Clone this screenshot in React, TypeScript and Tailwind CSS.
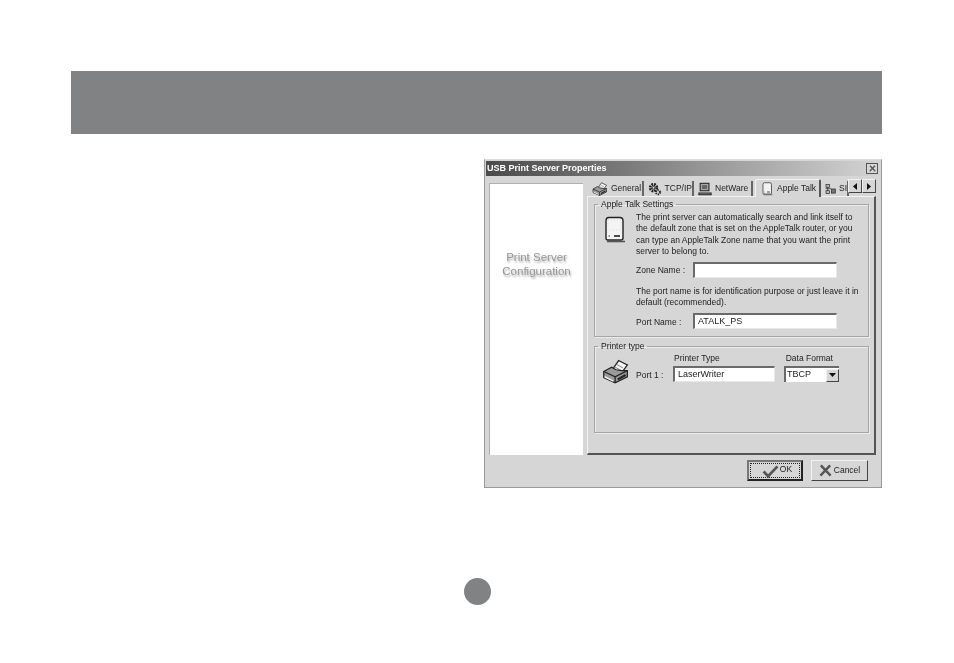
const font = "font-['Liberation_Sans',Arial,sans-serif]";

const PrinterIcon = ({ className = "" }: { className?: string }) => (
  <svg viewBox="0 0 32 28" className={className} fill="none" stroke="#222" strokeWidth="1.4">
    <path d="M11 13 L19 1.5 L29 6.5 L22 16 Z" fill="#f4f4f4" />
    <path d="M17 6 L24 10 M15 9 L22 13" stroke="#777" strokeWidth="1" />
    <path d="M2 14 L11 9 L16 12 L22 13 L29 13 L29 20 L15 27 L2 21 Z" fill="#9a9a9a" />
    <path d="M2 14 L15 20 L29 13 M15 20 L15 27" />
    <path d="M3 20 L13 25" stroke="#f0f0f0" strokeWidth="1.6" />
    <path d="M18 23 L27 18" stroke="#222" strokeWidth="2.4" />
  </svg>
);

const GearIcon = ({ className = "" }: { className?: string }) => (
  <svg viewBox="0 0 16 16" className={className} fill="#555" stroke="#222" strokeWidth="1">
    <circle cx="6.5" cy="6.5" r="3.8" strokeDasharray="2 1" strokeWidth="3.4" fill="none" />
    <circle cx="6.5" cy="6.5" r="1.6" fill="#ddd" />
    <circle cx="11.8" cy="11.8" r="2.4" strokeDasharray="1.4 1" strokeWidth="2.2" fill="none" />
  </svg>
);

const MonitorIcon = ({ className = "" }: { className?: string }) => (
  <svg viewBox="0 0 16 16" className={className} fill="none" stroke="#222" strokeWidth="1.2">
    <rect x="2.5" y="1.5" width="10" height="8.5" fill="#aaa" />
    <rect x="4.5" y="3.5" width="6" height="4.5" fill="#666" stroke="none" />
    <path d="M1 12.5 H15 V14.5 H1 Z" fill="#999" />
  </svg>
);

const MacIcon = ({ className = "" }: { className?: string }) => (
  <svg viewBox="0 0 22 28" className={className} fill="none" stroke="#222" strokeWidth="1.4">
    <path d="M5 1.5 H16 Q19 1.5 19 5 V22 Q19 24 17 24 H4 Q2 24 2 22 V5 Q2 1.5 5 1.5 Z" fill="#f4f4f4" />
    <path d="M4 4 H17 V14 H4 Z" stroke="#ddd" strokeDasharray="1 2" strokeWidth="1" />
    <path d="M10 20 H16" strokeWidth="1.6" />
    <path d="M4.5 20 H6" stroke="#777" />
    <path d="M3 25.5 H21" stroke="#555" strokeWidth="1.6" />
  </svg>
);

const NetworkIcon = ({ className = "" }: { className?: string }) => (
  <svg viewBox="0 0 16 16" className={className} fill="#bbb" stroke="#222" strokeWidth="1">
    <rect x="1.5" y="1.5" width="5" height="4" />
    <rect x="1.5" y="10.5" width="5" height="4" />
    <rect x="9.5" y="8" width="5.5" height="6" fill="#777" />
    <path d="M1 7.5 H9 M4 5.5 V10.5" fill="none" />
  </svg>
);

const CheckIcon = ({ className = "" }: { className?: string }) => (
  <svg viewBox="0 0 18 14" className={className} fill="none">
    <path d="M1.5 7 L6.5 12 L16.5 1.5" stroke="#555" strokeWidth="3" />
  </svg>
);

const CrossIcon = ({ className = "" }: { className?: string }) => (
  <svg viewBox="0 0 14 14" className={className} fill="none">
    <path d="M2 1.5 L12.5 12.5 M12 1.5 L1.5 12.5" stroke="#555" strokeWidth="2.6" />
  </svg>
);

const Tab = ({ width, icon, label, active }: { width: string; icon: React.ReactNode; label: string; active?: boolean }) => (
  <div
    className={
      active
        ? `${width} relative z-10 h-[18px] -mb-[1px] flex items-center gap-[4px] pl-[6px] bg-[#d6d6d6] border-t border-l border-[#f2f2f2] border-r-2 border-r-[#555] rounded-t-[2px] text-[8.5px] text-[#1c1c1c]`
        : `${width} mt-[2px] h-[15px] flex items-center gap-[3px] pl-[2px] border-r-2 border-r-[#666] text-[8.5px] text-[#1c1c1c]`
    }
  >
    {icon}
    <span className="whitespace-nowrap">{label}</span>
  </div>
);

const TextInput = ({ width, value }: { width: string; value?: string }) => (
  <div className={`${width} h-[16px] bg-white border-t-2 border-l-2 border-t-[#6a6a6a] border-l-[#6a6a6a] border-b border-r border-b-[#e8e8e8] border-r-[#e8e8e8] pl-[3px] text-[9px] leading-[12px] text-[#222]`}>
    {value}
  </div>
);

const Group = ({ title, className, children }: { title: string; className: string; children: React.ReactNode }) => (
  <fieldset className={`${className} w-[275px] min-w-0 border border-[#a6a6a6] shadow-[inset_1px_1px_0_#ececec,1px_1px_0_#ececec]`}>
    <legend className="ml-[3px] px-[3px] text-[8.5px] leading-[11px] text-[#1c1c1c]">{title}</legend>
    {children}
  </fieldset>
);

export default function App() {
  return (
    <div className={`${font} w-[954px] h-[663px] bg-white overflow-hidden flex flex-col items-start`}>
      <div className="ml-[71px] mt-[71px] w-[811px] h-[63px] bg-[#808284]" />

      {/* dialog scan */}
      <div className="ml-[484px] mt-[25px] w-[398px] h-[329px] bg-[#d6d6d6] border border-[#9a9a9a] border-t-[#dcdcdc] flex flex-col blur-[0.5px]">
        <div className="mx-[1px] mt-[1px] h-[15px] shrink-0 pl-[1px] pr-[2px] flex items-center justify-between bg-gradient-to-r from-[#4a4a4a] via-[#8f8f8f] to-[#d4d4d4]">
          <span className="text-[9px] font-bold text-white whitespace-nowrap">USB Print Server Properties</span>
          <div className="w-[12px] h-[11px] bg-[#d6d6d6] border border-[#555] flex items-center justify-center">
            <CrossIcon className="w-[7px] h-[7px]" />
          </div>
        </div>

        <div className="flex items-start pt-[3px] pl-[4px] gap-[4px]">
          <div className="mt-[4px] w-[94px] h-[272px] bg-white border-l border-t border-[#b0b0b0] flex flex-col items-center pt-[66px] text-[11.5px] leading-[14px] text-[#979797] [text-shadow:1px_2px_2px_#aaa]">
            <span>Print Server</span>
            <span>Configuration</span>
          </div>

          <div className="w-[289px] relative">
            <div className="h-[17px] flex items-start pl-[3px] gap-[2px]">
              <Tab width="w-[54px]" icon={<PrinterIcon className="w-[16px] h-[14px]" />} label="General" />
              <Tab width="w-[48px]" icon={<GearIcon className="w-[15px] h-[14px]" />} label="TCP/IP" />
              <Tab width="w-[57px]" icon={<MonitorIcon className="w-[14px] h-[14px]" />} label="NetWare" />
              <Tab width="w-[66px]" icon={<MacIcon className="w-[11px] h-[14px]" />} label="Apple Talk" active />
              <Tab width="w-[26px]" icon={<NetworkIcon className="w-[14px] h-[14px]" />} label="SI" />
            </div>

            {/* scroll arrows sit over the tab strip */}
            <div className="absolute right-0 top-0 flex z-20">
              {["M5 1 L1 4.5 L5 8 Z", "M1 1 L5 4.5 L1 8 Z"].map((d) => (
                <div key={d} className="w-[14px] h-[14px] bg-[#d6d6d6] border-t border-l border-t-[#f2f2f2] border-l-[#f2f2f2] border-b border-r border-b-[#444] border-r-[#444] flex items-center justify-center">
                  <svg viewBox="0 0 6 9" className="w-[6px] h-[9px]" fill="#111"><path d={d} /></svg>
                </div>
              ))}
            </div>

            <div className="h-[259px] w-[289px] border-t border-l border-t-[#f2f2f2] border-l-[#f2f2f2] border-r-2 border-b-2 border-r-[#555] border-b-[#555] pl-[6px] pt-[2px]">
              <Group title="Apple Talk Settings" className="h-[138px]">
                <div className="flex pl-[9px] pt-[2px]">
                  <MacIcon className="w-[22px] h-[28px] mt-[4px] shrink-0" />
                  <div className="ml-[10px] text-[8.5px] leading-[11.4px] text-[#1c1c1c] whitespace-nowrap">
                    <p>The print server can automatically search and link itself to</p>
                    <p>the default zone that is set on the AppleTalk router, or you</p>
                    <p>can type an AppleTalk Zone name that you want the print</p>
                    <p>server to belong to.</p>
                    <div className="flex items-center mt-[4px]">
                      <span className="w-[57px] mt-[3px]">Zone Name :</span>
                      <TextInput width="w-[144px]" />
                    </div>
                    <p className="mt-[8px]">The port name is for identification purpose or just leave it in</p>
                    <p>default (recommended).</p>
                    <div className="flex items-center mt-[5px]">
                      <span className="w-[57px] mt-[2px]">Port Name :</span>
                      <TextInput width="w-[144px]" value="ATALK_PS" />
                    </div>
                  </div>
                </div>
              </Group>

              <Group title="Printer type" className="h-[92px] mt-[4px]">
                <div className="flex pl-[7px]">
                  <PrinterIcon className="w-[28px] h-[25px] mt-[7px] shrink-0" />
                  <div className="ml-[6px] text-[8.5px] text-[#1c1c1c] whitespace-nowrap">
                    <div className="flex leading-[11px] pl-[38px] gap-[66px] mt-[1px]">
                      <span>Printer Type</span>
                      <span>Data Format</span>
                    </div>
                    <div className="flex items-center mt-[2px]">
                      <span className="w-[37px] mt-[3px]">Port 1 :</span>
                      <TextInput width="w-[102px]" value="LaserWriter" />
                      <div className="ml-[9px] w-[55px] h-[16px] bg-white border-t-2 border-l-2 border-t-[#6a6a6a] border-l-[#6a6a6a] flex items-center justify-between pl-[1px] text-[9px]">
                        TBCP
                        <div className="w-[13px] h-[13px] bg-[#d6d6d6] border border-b-[#444] border-r-[#444] border-t-[#f2f2f2] border-l-[#f2f2f2] flex items-center justify-center">
                          <svg viewBox="0 0 7 4" className="w-[7px] h-[4px]" fill="#111"><path d="M0 0 H7 L3.5 4 Z" /></svg>
                        </div>
                      </div>
                    </div>
                  </div>
                </div>
              </Group>
            </div>
          </div>
        </div>

        <div className="flex justify-end gap-[8px] pr-[13px] pt-[5px] text-[8.5px] text-[#222]">
          <div className="w-[56px] h-[21px] bg-[#d6d6d6] border-2 border-t-[#777] border-l-[#777] border-r-[#222] border-b-[#222] p-[1px]">
            <div className="h-full border border-dotted border-[#222] flex items-center justify-center gap-[1px] pl-[4px]">
              <CheckIcon className="w-[17px] h-[13px] mt-[2px]" />
              <span className="-mt-[2px]">OK</span>
            </div>
          </div>
          <div className="w-[57px] h-[21px] bg-[#d6d6d6] border border-t-[#f2f2f2] border-l-[#f2f2f2] border-r-[#444] border-b-[#444] flex items-center justify-center gap-[2px]">
            <CrossIcon className="w-[13px] h-[13px]" />
            <span>Cancel</span>
          </div>
        </div>
      </div>

      <div className="ml-[464px] mt-[90px] w-[27px] h-[27px] rounded-full bg-[#808284]" />
    </div>
  );
}
